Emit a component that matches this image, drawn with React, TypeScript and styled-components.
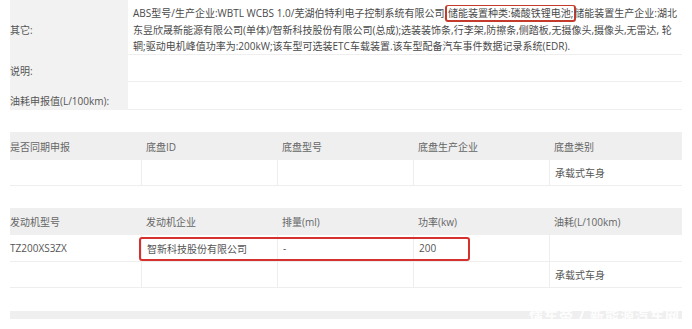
import styled, { createGlobalStyle } from "styled-components";

const GlobalStyle = createGlobalStyle`
    html, body {
        margin: 0;
        padding: 0;
        background: #ffffff;
    }
    body {
        font-family: "Open Sans", "Noto Sans CJK SC", sans-serif;
        font-size: 10px;
        color: #555555;
    }
`;

const Page = styled.div`
    width: 692px;
    height: 329px;
    overflow: hidden;
    padding: 0 10px;
    box-sizing: border-box;
    display: flex;
    flex-direction: column;
`;

const InfoTable = styled.div`
    display: grid;
    grid-template-columns: 118px 1fr;
`;

interface RowHeightProps {
    $height: number;
}

const InfoLabel = styled.div<RowHeightProps & { $offset: number }>`
    background-color: #f2f2f2;
    height: ${(props) => props.$height}px;
    display: flex;
    align-items: center;
    padding-top: ${(props) => props.$offset}px;
    box-sizing: border-box;
    color: #555555;
    white-space: nowrap;
`;

const InfoValue = styled.div<RowHeightProps>`
    height: ${(props) => props.$height}px;
    border-bottom: 1px solid #eeeeee;
    box-sizing: border-box;
    padding: 5px 0 0 5px;
    color: #4a4a4a;
    line-height: 16.5px;
`;

const TextLine = styled.div`
    white-space: nowrap;
`;

const Marked = styled.span`
    border: 2px solid #c23b2b;
    border-top-width: 1px;
    border-radius: 3px;
    padding: 0 1px;
    margin: 0 -2px;
`;

const SpecTable = styled.div<{ $gap: number }>`
    margin-top: ${(props) => props.$gap}px;
    display: grid;
    grid-template-columns: 131px 136px 136px 136px 1fr;
`;

const HeaderCell = styled.div<RowHeightProps & { $first?: boolean }>`
    background-color: #efefef;
    height: ${(props) => props.$height}px;
    display: flex;
    align-items: center;
    padding-left: ${(props) => (props.$first ? 0 : 5)}px;
    color: #666666;
    white-space: nowrap;
`;

const BodyCell = styled.div<RowHeightProps & { $first?: boolean }>`
    height: ${(props) => props.$height}px;
    box-sizing: border-box;
    display: flex;
    align-items: center;
    padding-left: ${(props) => (props.$first ? 0 : 5)}px;
    border-left: ${(props) => (props.$first ? "none" : "1px solid #eeeeee")};
    border-bottom: 1px solid #eeeeee;
    color: #555555;
    white-space: nowrap;
`;

const HighlightRow = styled.div`
    grid-column: 1 / -1;
    display: grid;
    grid-template-columns: 131px 136px 136px 136px 1fr;
    position: relative;
`;

const HighlightBox = styled.div`
    position: absolute;
    left: 129px;
    top: 2px;
    width: 331px;
    height: 24px;
    box-sizing: border-box;
    border: 2px solid #d6312e;
    border-radius: 3px;
    pointer-events: none;
`;

const BottomBar = styled.div`
    margin-top: 23px;
    height: 8px;
    background-color: #efefef;
    position: relative;
`;

const Watermark = styled.div`
    position: absolute;
    right: 2px;
    top: -2px;
    font-size: 14px;
    line-height: 14px;
    font-weight: bold;
    color: rgba(255, 255, 255, 0.9);
    letter-spacing: 1px;
    white-space: nowrap;
`;

const chassisHeaders = ["是否同期申报", "底盘ID", "底盘型号", "底盘生产企业", "底盘类别"];
const chassisRow = ["", "", "", "", "承载式车身"];

const engineHeaders = ["发动机型号", "发动机企业", "排量(ml)", "功率(kw)", "油耗(L/100km)"];
const engineRow = ["TZ200XS3ZX", "智新科技股份有限公司", "-", "200", ""];
const engineRow2 = ["", "", "", "", "承载式车身"];

export default function App() {
    return (
        <>
            <GlobalStyle />
            <Page>
                <InfoTable>
                    <InfoLabel $height={55} $offset={3}>其它:</InfoLabel>
                    <InfoValue $height={55}>
                        <TextLine>
                            ABS型号/生产企业:WBTL WCBS 1.0/芜湖伯特利电子控制系统有限公司;
                            <Marked>储能装置种类:磷酸铁锂电池;</Marked>
                            储能装置生产企业:湖北
                        </TextLine>
                        <TextLine>
                            东昱欣晟新能源有限公司(单体)/智新科技股份有限公司(总成);选装装饰条,行李架,防擦条,侧踏板,无摄像头,摄像头,无雷达, 轮
                        </TextLine>
                        <TextLine>
                            辋;驱动电机峰值功率为:200kW;该车型可选装ETC车载装置.该车型配备汽车事件数据记录系统(EDR).
                        </TextLine>
                    </InfoValue>
                    <InfoLabel $height={27} $offset={4}>说明:</InfoLabel>
                    <InfoValue $height={27} />
                    <InfoLabel $height={28} $offset={9}>油耗申报值(L/100km):</InfoLabel>
                    <InfoValue $height={28} />
                </InfoTable>

                <SpecTable $gap={22}>
                    {chassisHeaders.map((h, idx) => (
                        <HeaderCell key={h} $height={28} $first={idx === 0}>
                            {h}
                        </HeaderCell>
                    ))}
                    {chassisRow.map((v, idx) => (
                        <BodyCell key={idx} $height={26} $first={idx === 0}>
                            {v}
                        </BodyCell>
                    ))}
                </SpecTable>

                <SpecTable $gap={22}>
                    {engineHeaders.map((h, idx) => (
                        <HeaderCell key={h} $height={27} $first={idx === 0}>
                            {h}
                        </HeaderCell>
                    ))}
                    <HighlightRow>
                        {engineRow.map((v, idx) => (
                            <BodyCell key={idx} $height={27} $first={idx === 0}>
                                {v}
                            </BodyCell>
                        ))}
                        <HighlightBox />
                    </HighlightRow>
                    {engineRow2.map((v, idx) => (
                        <BodyCell key={idx} $height={26} $first={idx === 0}>
                            {v}
                        </BodyCell>
                    ))}
                </SpecTable>

                <BottomBar>
                    <Watermark>懂车帝 / 新能源汽车网</Watermark>
                </BottomBar>
            </Page>
        </>
    );
}
